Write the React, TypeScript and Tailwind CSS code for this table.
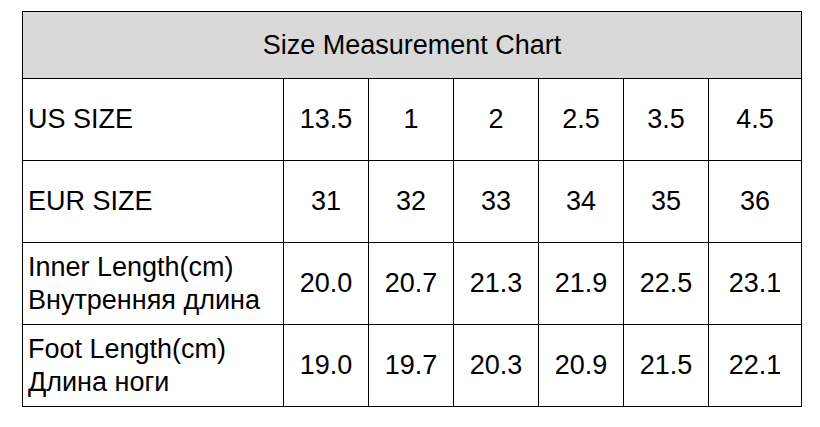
const sizes = [
  { label: ['US SIZE'], values: ['13.5', '1', '2', '2.5', '3.5', '4.5'] },
  { label: ['EUR SIZE'], values: ['31', '32', '33', '34', '35', '36'] },
  {
    label: ['Inner Length(cm)', 'Внутренняя длина'],
    values: ['20.0', '20.7', '21.3', '21.9', '22.5', '23.1'],
  },
  {
    label: ['Foot Length(cm)', 'Длина ноги'],
    values: ['19.0', '19.7', '20.3', '20.9', '21.5', '22.1'],
  },
];

export default function App() {
  return (
    <div className="h-[427px] w-[820px] bg-white pt-[11px] pl-[22px] font-['Liberation_Sans',Arial,sans-serif] text-[27px] leading-[33px] text-black">
      <div className="grid w-[780px] grid-cols-[260px_84px_84px_84px_84px_84px_92px] grid-rows-[66px_81px_81px_81px_81px] gap-px bg-black p-px">
        <div className="col-span-7 flex items-center justify-center bg-[#d9d9d9]">
          Size Measurement Chart
        </div>
        {sizes.map((row) => (
          <div className="contents" key={row.label[0]}>
            <div className="flex flex-col justify-center bg-white pl-[5px]">
              {row.label.map((line) => (
                <span key={line}>{line}</span>
              ))}
            </div>
            {row.values.map((value, index) => (
              <div
                className="flex items-center justify-center bg-white"
                key={`${row.label[0]}-${index}`}
              >
                {value}
              </div>
            ))}
          </div>
        ))}
      </div>
    </div>
  );
}
